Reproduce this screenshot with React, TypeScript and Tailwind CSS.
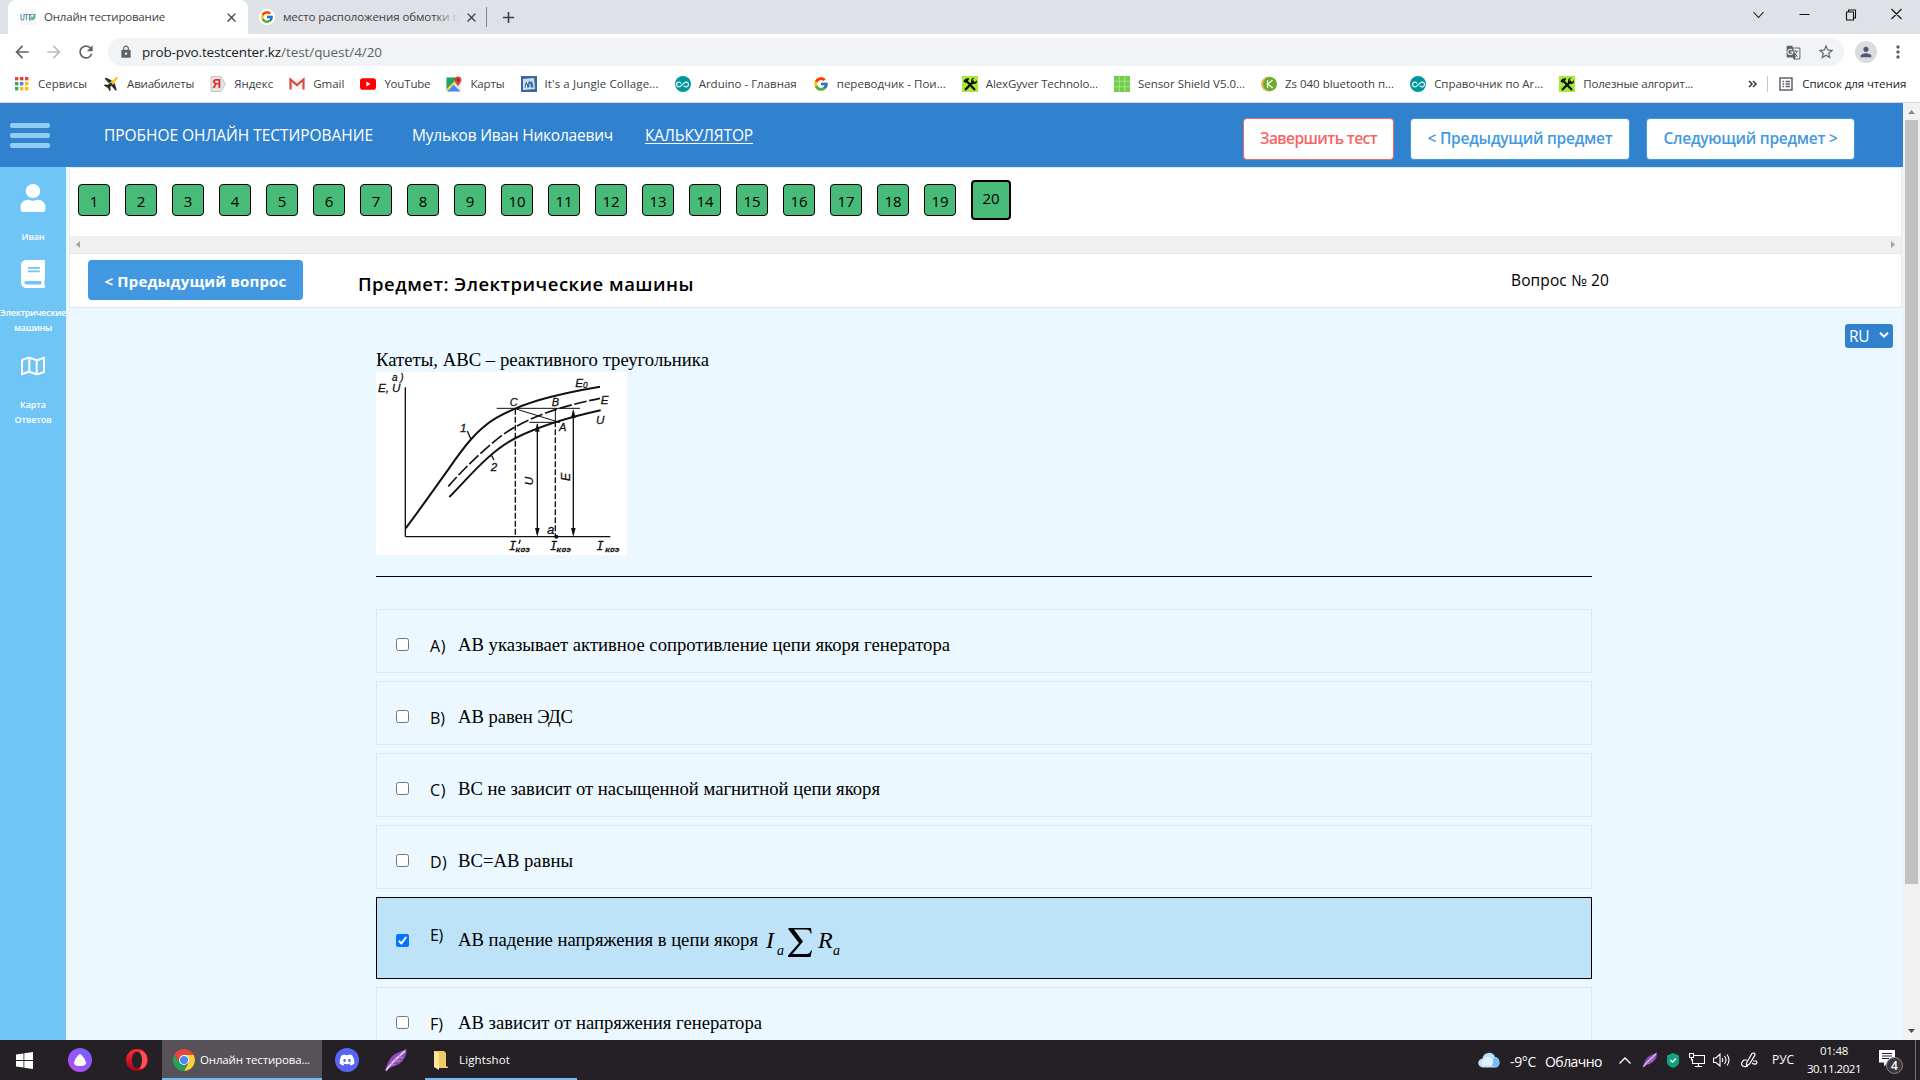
import { useLayoutEffect, useRef, type ReactNode } from 'react';
import { FaUser, FaBook, FaRegMap, FaDiscord } from 'react-icons/fa';
import { FcGoogle } from 'react-icons/fc';
import { MdArrowBack, MdArrowForward, MdRefresh, MdLock, MdStarBorder, MdPerson, MdMoreVert, MdAllInclusive, MdClose, MdAdd, MdGTranslate } from 'react-icons/md';

/** A single line of text whose letter spacing is adjusted so that it fills `w` pixels. */
function Fit({ w, className = '', underline = false, children }: { w: number; className?: string; underline?: boolean; children: string }) {
  const ref = useRef<HTMLSpanElement>(null);
  useLayoutEffect(() => {
    const el = ref.current;
    if (!el) return;
    const adjust = () => {
      el.style.letterSpacing = '0px';
      const natural = el.getBoundingClientRect().width;
      el.style.letterSpacing = `${(w - natural) / children.length}px`;
    };
    adjust();
    document.fonts?.ready.then(adjust);
  }, [w, children]);
  return (
    <span className={`inline-block shrink-0 whitespace-nowrap ${className}`} style={{ width: w }}>
      <span ref={ref} className={underline ? 'inline-block underline underline-offset-2' : 'inline-block'}>{children}</span>
    </span>
  );
}

const AppsIcon = () => (
  <svg viewBox="0 0 16 16" className="size-4">
    {['#ea4335', '#ea4335', '#ea4335', '#34a853', '#4285f4', '#fbbc05', '#34a853', '#fbbc05', '#fbbc05'].map((c, i) => (
      <rect key={i} x={1 + (i % 3) * 5} y={1 + Math.floor(i / 3) * 5} width="3.4" height="3.4" fill={c} />
    ))}
  </svg>
);
const Plane = () => (
  <svg viewBox="0 0 16 16" className="size-4">
    <path d="M5.500 8L13 1.200q2-.8 1.700 1L8.500 10z" fill="#f5c518" />
    <path d="M1.500 2.500l2-.8L9 4.800 6 7.200zM8.500 10l3-3 2.200 6.500-1 1.300zM.8 9.500l1-.9 3 .2L8 6.500l1.800 2-2.600 2.600.5 3.200-1 1L4.900 12z" fill="#2b2b2b" />
  </svg>
);
const Yandex = () => (
  <svg viewBox="0 0 16 16" className="size-4">
    <path d="M1 .5h10l4.500 7.500-4.500 7.500H1z" fill="#e4e4e4" stroke="#bbb" strokeWidth=".8" />
    <text x="2.500" y="12.200" fontSize="12" fontWeight="bold" fill="#e52620" fontFamily="Liberation Sans">Я</text>
  </svg>
);
const Gmail = () => (
  <svg viewBox="0 0 16 16" className="size-4">
    <rect x="1" y="2.500" width="14" height="11" fill="#f3f3f3" />
    <path d="M1.500 13.500V3.500l6.500 5.500 6.500-5.500v10" fill="none" stroke="#d54b3d" strokeWidth="2.200" />
  </svg>
);
const YouTube = () => (
  <svg viewBox="0 0 16 16" className="size-4">
    <rect y="2.300" width="16" height="11.400" rx="2.800" fill="#f00" />
    <path d="M6.400 5.600v4.800l4.100-2.400z" fill="#fff" />
  </svg>
);
const MapsIcon = () => (
  <svg viewBox="0 0 16 16" className="size-4">
    <rect x=".5" y="1.500" width="14" height="14" rx="1" fill="#e8e8e8" />
    <path d="M.5 1.500h9v5l-9 8z" fill="#1fa463" />
    <path d="M1 15.500l6.500-7 7 7z" fill="#4a89f3" />
    <path d="M1 14L11 4" stroke="#fcd34d" strokeWidth="1.800" />
    <path d="M12 .5a3.400 3.400 0 013.400 3.400C15.400 6.300 12 10 12 10S8.600 6.300 8.600 3.900A3.400 3.400 0 0112 .5z" fill="#dc4437" />
    <circle cx="12" cy="3.900" r="1.200" fill="#7a231c" />
  </svg>
);
const Jungle = () => (
  <svg viewBox="0 0 16 16" className="size-4">
    <rect width="16" height="16" fill="#3a699f" />
    <path d="M2 3l11-1 1 11-12 1z" fill="#cfdff0" />
    <path d="M3.500 11.500l1.500-6 2 3 1-4 2 2 1-2 1.500 7z" fill="#3a699f" />
    <path d="M5.500 12v-3M9 12V8" stroke="#fff" />
  </svg>
);
const Arduino = () => (
  <span className="flex size-4 items-center justify-center rounded-full bg-[#00979d] text-white"><MdAllInclusive className="size-[13px]" /></span>
);
const Tools = () => (
  <svg viewBox="0 0 16 16" className="size-4">
    <rect width="16" height="16" fill="#a8e83c" />
    <path d="M13 14L4 4.500M3 14L12 5" stroke="#0c1204" strokeWidth="2.300" />
    <path d="M1.500 5.500Q2 2.500 6.500 2L7 3.500 3.500 7z" fill="#0c1204" />
    <path d="M12.500 1.500l-2 2.500.3 2 2 .3 2.200-2Q15.500 8 12 8 9 8 9 5 9 2 12.500 1.500z" fill="#0c1204" />
  </svg>
);
const Shield = () => (
  <svg viewBox="0 0 16 16" className="size-4">
    <rect width="16" height="16" fill="#6fce4a" />
    <path d="M5.300 0v16M10.700 0v16M0 5.300h16M0 10.700h16" stroke="#b7e6a0" strokeWidth=".8" />
  </svg>
);
const KIcon = () => (
  <svg viewBox="0 0 16 16" className="size-4">
    <circle cx="7.500" cy="8" r="7.500" fill="#f0b45a" />
    <circle cx="9" cy="8" r="7" fill="#6aae2c" />
    <path d="M6.500 4v8M11.500 4L6.800 8.200l4.900 3.800" fill="none" stroke="#fff" strokeWidth="1.200" />
  </svg>
);
const Chrome = () => (
  <svg viewBox="0 0 24 24" className="size-[22px]">
    <path d="M1.600 6A12 12 0 0122.400 6z" fill="#e4483a" />
    <path d="M12 6.500h10.600A12 12 0 0112 24L17 15z" fill="#fbcd3f" />
    <path d="M1.600 6L7 15l8 2-3 7A12 12 0 011.600 6z" fill="#27a058" />
    <path d="M1.600 6l5.600 9V9.500L12 6.500h10.600L22 5 3 4z" fill="#e4483a" />
    <circle cx="12" cy="12" r="5.500" fill="#fff" />
    <circle cx="12" cy="12" r="4.500" fill="#4a8af4" />
  </svg>
);
const Feather = ({ className }: { className: string }) => (
  <svg viewBox="0 0 24 24" className={className}>
    <path d="M1.500 23C2 17 6 9 11 6 15 3.500 19 3 22.500.5 23 6 21 11 17 14.500 12 19 7 18 1.500 23z" fill="#8c4db5" />
    <path d="M2 22.500C7 15 14 9 21 3" stroke="#e3c7f2" strokeWidth="1.800" fill="none" />
    <path d="M8 13l-1 3 4 1M12 9l-1 4 5 0M16 6l-1 4 4-1" stroke="#c08be0" strokeWidth="1" fill="none" />
  </svg>
);

const bookmarks: [ReactNode, string, number][] = [
  [<AppsIcon />, 'Сервисы', 49],
  [<Plane />, 'Авиабилеты', 67],
  [<Yandex />, 'Яндекс', 39],
  [<Gmail />, 'Gmail', 31],
  [<YouTube />, 'YouTube', 46],
  [<MapsIcon />, 'Карты', 34],
  [<Jungle />, "It's a Jungle Collage...", 114],
  [<Arduino />, 'Arduino - Главная', 98],
  [<FcGoogle className="size-4" />, 'переводчик - Пои...', 109],
  [<Tools />, 'AlexGyver Technolo...', 112],
  [<Shield />, 'Sensor Shield V5.0...', 107],
  [<KIcon />, 'Zs 040 bluetooth п...', 109],
  [<Arduino />, 'Справочник по Ar...', 109],
  [<Tools />, 'Полезные алгорит...', 110],
];

function Browser() {
  return (
    <header className="h-[103px] shrink-0 border-b border-[#d5d7da] bg-white text-[#3c4043]">
      <div className="flex h-[34px] items-center bg-[#dee1e6] text-[11.5px]">
        <div className="ml-2 flex h-full w-[240px] items-center rounded-t-lg bg-white pl-3">
          <svg viewBox="0 0 16 16" className="size-4">
            <rect width="16" height="16" fill="#f4f6f8" />
            <path d="M1 5v4q0 2 1.500 2T4 9V5M4.500 5.500h4M6.500 5.500V11M12 5.500H9.500V11H11" fill="none" stroke="#6f93b3" strokeWidth="1.100" />
            <circle cx="12.300" cy="8" r="2.700" fill="none" stroke="#6f93b3" />
            <path d="M11 8l1.500 1.500L15.500 5" fill="none" stroke="#25b660" strokeWidth="1.200" />
          </svg>
          <Fit w={121} className="ml-2">Онлайн тестирование</Fit>
          <MdClose className="ml-[59px] size-[15px]" />
        </div>
        <div className="ml-[11px] flex size-4 items-center justify-center rounded-full bg-white"><FcGoogle className="size-[14px]" /></div>
        <div className="relative ml-2 w-[175px] overflow-hidden">
          <Fit w={176}>место расположения обмотки в</Fit>
          <div className="absolute inset-y-0 right-0 w-6 bg-linear-to-r from-transparent to-[#dee1e6]" />
        </div>
        <MdClose className="ml-[6px] size-[15px]" />
        <div className="ml-[7px] h-5 w-px bg-[#80868b]" />
        <MdAdd className="ml-3 size-[19px]" />
        <div className="flex-1" />
        <svg viewBox="0 0 162 20" className="mr-[9px] mb-1.5 h-5 w-[162px]" fill="none" stroke="#111" strokeWidth="1.100">
          <path d="M4.500 8l5 5.500 5-5.500M50.500 10.500h10M97.500 8h7v8h-7zM99.500 8V6h7v8h-2M142.500 5l10 10M152.500 5l-10 10" />
        </svg>
      </div>
      <div className="flex h-9 items-center text-[#5f6368]">
        <MdArrowBack className="ml-3 size-5" />
        <MdArrowForward className="ml-3 size-5 text-[#bbbdc0]" />
        <MdRefresh className="ml-3 size-5" />
        <div className="ml-3 flex h-7 w-[1736px] items-center rounded-full bg-[#f1f3f4] pl-[11px]">
          <MdLock className="size-[14px]" />
          <Fit w={139} className="ml-[9px] text-[13.5px] text-[#202124]">prob-pvo.testcenter.kz</Fit>
          <Fit w={101} className="text-[13.5px]">/test/quest/4/20</Fit>
          <MdGTranslate className="ml-auto size-[15px]" />
          <MdStarBorder className="mr-[9px] ml-[16px] size-[18px]" />
        </div>
        <div className="ml-[11px] flex size-[22px] items-center justify-center rounded-full bg-[#dadce0]"><MdPerson className="size-4 text-[#4d5a70]" /></div>
        <MdMoreVert className="ml-[11px] size-5" />
      </div>
      <div className="flex h-7 items-center pl-[14px] text-[11.5px]">
        <div className="flex gap-[16.100px]">
          {bookmarks.map(([icon, label, w]) => (
            <div key={label} className="flex items-center gap-2">
              <span className="shrink-0">{icon}</span>
              <Fit w={w}>{label}</Fit>
            </div>
          ))}
        </div>
        <svg viewBox="0 0 10 10" className="ml-[55px] size-[10px]" fill="none" stroke="#3c4043" strokeWidth="1.600"><path d="M1 2l3 3-3 3M5 2l3 3-3 3" /></svg>
        <div className="ml-[9px] h-4 w-px bg-[#c4c7cb]" />
        <svg viewBox="0 0 14 14" className="ml-[11px] size-[14px]" fill="none" stroke="#5f6368" strokeWidth="1.500"><path d="M1 1h12v12H1zM3.500 4.500h1.500M6.500 4.500H11M3.500 7h1.500M6.500 7H11M3.500 9.500h1.500M6.500 9.500H11" /></svg>
        <Fit w={104} className="ml-[9px] text-[#202124]">Список для чтения</Fit>
      </div>
    </header>
  );
}

function Sidebar() {
  return (
    <aside className="relative z-10 flex w-[66px] shrink-0 flex-col items-center bg-[#70c5f7] text-center text-[9px] leading-[15px] font-semibold text-white">
      <FaUser className="mt-[17px] h-7 w-6 scale-x-[1.050]" preserveAspectRatio="none" />
      <Fit w={23} className="mt-[17px]">Иван</Fit>
      <FaBook className="mt-4 h-7 w-6" preserveAspectRatio="none" />
      <Fit w={66} className="mt-[17px]">Электрические</Fit>
      <Fit w={38}>машины</Fit>
      <FaRegMap className="mt-[19px] h-6 w-6" />
      <Fit w={26} className="mt-[19px]">Карта</Fit>
      <Fit w={37}>Ответов</Fit>
    </aside>
  );
}

function Graph() {
  return (
    <svg viewBox="48 93 753 549" className="h-[183px] w-[251px] bg-white" fill="none" stroke="#111" strokeWidth="4">
      <path d="M136 139V587M137 587H751" strokeWidth="4" />
      <path d="M137 562C180 505 215 455 265 385 310 320 350 265 410 230 480 190 570 162 720 137" strokeWidth="6" />
      <path d="M265 436C310 385 365 330 430 280 500 232 590 198 720 172" strokeDasharray="38 8" strokeWidth="5" />
      <path d="M268 468C330 405 390 330 467 291 540 255 630 228 722 208" strokeWidth="6" />
      <path d="M410 202H660M508 244H600M465 203L588 241M586 203V241" strokeWidth="3" />
      <path d="M466 203V587M586 241V587" strokeDasharray="18 6" strokeWidth="4" />
      <path d="M532 250V580M640 210V580M322 270L333 295M393 341L402 357" strokeWidth="4" />
      <path d="M532 246l7 26h-14zM532 587l7-26h-14zM640 204l7 26h-14zM640 587l7-26h-14z" fill="#111" stroke="none" />
      <circle cx="589" cy="587" r="6" fill="#111" stroke="none" />
      <path d="M481 596l-4 12" strokeWidth="4" />
      <g fill="#111" stroke="#111" strokeWidth=".8" fontFamily="Liberation Sans" fontStyle="italic" fontSize="35">
        <text x="96" y="119" fontSize="30">а )</text>
        <text x="54" y="153" textLength="67">E, U</text>
        <text x="449" y="195" fontSize="33">C</text>
        <text x="575" y="196" fontSize="33">B</text>
        <text x="597" y="269" fontSize="33">A</text>
        <text x="646" y="137">E<tspan fontSize="25" dy="5">0</tspan></text>
        <text x="722" y="189">E</text>
        <text x="708" y="248">U</text>
        <text x="300" y="272">1</text>
        <text x="392" y="389">2</text>
        <text x="561" y="579" fontSize="40">a</text>
        <text transform="translate(520 433) rotate(-90)">U</text>
        <text transform="translate(631 420) rotate(-90)" fontSize="37">E</text>
        <g fontFamily="Liberation Mono">
          <text x="446" y="627" fontSize="38">I<tspan fontSize="24" dx="-2" dy="7" fontWeight="bold">коз</tspan></text>
          <text x="569" y="627" fontSize="38">I<tspan fontSize="24" dx="-2" dy="7" fontWeight="bold">коэ</tspan></text>
          <text x="709" y="627" fontSize="38">I<tspan fontSize="24" dx="4" dy="7" fontWeight="bold">коэ</tspan></text>
        </g>
      </g>
    </svg>
  );
}

function Check({ on }: { on?: boolean }) {
  return on ? (
    <svg viewBox="0 0 13 13" className="size-[13px] shrink-0"><rect width="13" height="13" rx="2" fill="#0075ff" /><path d="M2.800 6.800l2.600 2.700 4.800-6.500" fill="none" stroke="#fff" strokeWidth="2" /></svg>
  ) : (
    <span className="block size-[13px] shrink-0 rounded-[2.500px] border border-[#767676] bg-white" />
  );
}

function Formula() {
  return (
    <svg viewBox="0 0 76 34" className="ml-[6px] h-[34px] w-[76px] shrink-0" fill="#000" fontFamily="Liberation Serif" fontStyle="italic">
      <text x="2" y="22" fontSize="24">I</text>
      <text x="13" y="29" fontSize="14">a</text>
      <text x="54" y="22" fontSize="24">R</text>
      <text x="69" y="29" fontSize="14">a</text>
      <path d="M24.500 2H47l.7 5.500h-1C46 4.500 45 3.500 42 3.500H30L39 15.500 28.500 28H42c3 0 4-1 5-3.500h1L46.500 31H24v-1.500L35 17 24.500 3.500z" />
    </svg>
  );
}

function Answer({ letter, text, w, lw }: { letter: string; text: string; w: number; lw: number }) {
  const selected = letter === 'E)';
  return (
    <div className={selected ? 'mb-2 flex h-[82px] shrink-0 items-center border border-black bg-[#bee3f8] pl-[19px]' : 'mb-2 flex h-16 shrink-0 items-center border border-[#dbe9f3] pl-[19px]'}>
      <div className={selected ? 'pt-1' : 'pt-[7px]'}><Check on={selected} /></div>
      <div className={selected ? 'ml-[21px] w-[29px] pb-[6px] text-base leading-6' : 'ml-[21px] w-[29px] pt-[10px] text-base leading-6'}><Fit w={lw}>{letter}</Fit></div>
      <Fit w={w} className={selected ? "-ml-px pt-[4px] font-['Liberation_Serif',serif] text-[18.670px] leading-7" : "-ml-px pt-[8px] font-['Liberation_Serif',serif] text-[18.670px] leading-7"}>{text}</Fit>
      {selected && <div className="pt-[10px]"><Formula /></div>}
    </div>
  );
}

const answers = [
  { letter: 'A)', text: 'АВ указывает активное сопротивление цепи якоря генератора', w: 492, lw: 16 },
  { letter: 'B)', text: 'АВ равен ЭДС', w: 115, lw: 15 },
  { letter: 'C)', text: 'ВС не зависит от насыщенной магнитной цепи якоря', w: 422, lw: 16 },
  { letter: 'D)', text: 'ВС=АВ равны', w: 115, lw: 17 },
  { letter: 'E)', text: 'АВ падение напряжения в цепи якоря', w: 300, lw: 13 },
  { letter: 'F)', text: 'АВ зависит от напряжения генератора', w: 304, lw: 13 },
];

function TestPage() {
  return (
    <div className="flex min-w-0 flex-1 flex-col">
      <div className="flex h-16 shrink-0 items-center bg-[#3182ce] pl-[10px] text-[15.500px] text-white">
        <div className="flex w-10 flex-col gap-[5px]">
          {[0, 1, 2].map((i) => <div key={i} className="h-[5px] rounded-xs bg-[#90cdf4]" />)}
        </div>
        <Fit w={269} className="mt-0.5 ml-[54px]">ПРОБНОЕ ОНЛАЙН ТЕСТИРОВАНИЕ</Fit>
        <Fit w={201} className="mt-0.5 ml-[39px]">Мульков Иван Николаевич</Fit>
        <Fit w={108} underline className="mt-0.5 ml-8">КАЛЬКУЛЯТОР</Fit>
        <div className="mt-[8px] ml-auto flex gap-4 pr-[48px] text-[15.500px] font-semibold text-[#4299e1]">
          <button className="flex h-[42px] w-[151px] items-center justify-center rounded border border-[#f56565] bg-white text-[#f56565]"><Fit w={117}>Завершить тест</Fit></button>
          <button className="flex h-[42px] w-[220px] items-center justify-center rounded border border-[#4299e1] bg-white"><Fit w={185}>{'< Предыдущий предмет'}</Fit></button>
          <button className="flex h-[42px] w-[209px] items-center justify-center rounded border border-[#4299e1] bg-white"><Fit w={174}>{'Следующий предмет >'}</Fit></button>
        </div>
      </div>
      <div className="flex min-h-0 flex-1">
        <Sidebar />
        <main className="flex min-w-0 flex-1 flex-col overflow-hidden bg-[#ebf8ff] pl-[3px]">
          <div className="mr-px h-[87px] shrink-0 border border-[#e2e8f0] bg-white">
            <div className="flex h-[68px] gap-[15px] pt-4 pl-2">
              {Array.from({ length: 19 }, (_, i) => (
                <div key={i} className="flex size-8 items-center justify-center rounded border border-black bg-[#48bb78] pt-[3px] text-[15px]">{i + 1}</div>
              ))}
              <div className="-mt-1 flex size-10 items-center justify-center rounded border-2 border-black bg-[#48bb78] pb-[3px] text-[15px]">20</div>
            </div>
            <div className="flex h-[17px] items-center justify-between bg-[#f0f0f0] px-[6px]">
              <svg viewBox="0 0 4 7" className="h-[7px] w-1" fill="#a3a3a3"><path d="M4 0v7L0 3.500z" /></svg>
              <svg viewBox="0 0 4 7" className="h-[7px] w-1" fill="#a3a3a3"><path d="M0 0v7l4-3.500z" /></svg>
            </div>
          </div>
          <div className="mr-px flex h-[54px] shrink-0 border border-t-0 border-[#e2e8f0] bg-white">
            <button className="mt-[6px] ml-[18px] flex h-10 w-[215px] items-center justify-center rounded bg-[#4299e1] pt-0.5 text-[15px] font-bold text-white"><Fit w={182}>{'< Предыдущий вопрос'}</Fit></button>
            <Fit w={336} className="mt-4 ml-[55px] text-[18.500px] leading-7 font-semibold">Предмет: Электрические машины</Fit>
            <Fit w={98} className="mt-[14px] ml-[817px] text-[15.500px] leading-6">Вопрос № 20</Fit>
          </div>
          <div className="mt-4 mr-[10px] ml-auto flex h-[24px] w-12 shrink-0 items-center rounded-[3px] bg-[#3182ce] pt-px pl-1 text-white">
            <Fit w={20} className="text-[15.500px]">RU</Fit>
            <svg viewBox="0 0 10 6" className="mb-1 ml-[10px] h-[6px] w-[10px]" fill="none" stroke="#fff" strokeWidth="2"><path d="M1 .8l4 3.800L9 .8" /></svg>
          </div>
          <section className="ml-[307px] flex w-[1216px] flex-col">
            <Fit w={333} className="font-['Liberation_Serif',serif] text-[18.670px] leading-6">Катеты, ABC – реактивного треугольника</Fit>
            <Graph />
            <div className="mt-[21px] mb-8 h-px shrink-0 bg-black" />
            {answers.map((a) => <Answer key={a.letter} {...a} />)}
          </section>
        </main>
      </div>
    </div>
  );
}

function Taskbar() {
  return (
    <footer className="flex h-10 shrink-0 items-center bg-[#242025] text-white">
      <svg viewBox="0 0 17 17" className="ml-4 size-[17px]" fill="#fff"><path d="M0 2.400l7.500-1v6.700H0zM8.300 1.300L17 0v8.100H8.300zM0 8.900h7.500v6.700l-7.500-1zM8.300 8.900H17V17l-8.700-1.300z" /></svg>
      <svg viewBox="0 0 24 24" className="ml-[35px] size-6">
        <defs><linearGradient id="al" x1="0" y1="1" x2="1" y2="0"><stop stopColor="#b94df0" /><stop offset="1" stopColor="#6b63ff" /></linearGradient></defs>
        <circle cx="12" cy="12" r="12" fill="url(#al)" />
        <path d="M12 6c1.500 0 6 6.500 6 9s-3.500 3-6 3-6-.5-6-3 4.500-9 6-9z" fill="#fff" />
      </svg>
      <svg viewBox="0 0 24 24" className="ml-[34px] size-[22px]">
        <defs><linearGradient id="op" x1="0" y1="0" x2="0" y2="1"><stop stopColor="#ff2a3c" /><stop offset="1" stopColor="#a60614" /></linearGradient></defs>
        <path fillRule="evenodd" d="M12 0a12 12 0 110 24 12 12 0 010-24zm0 3c-3.500 0-5.500 4-5.500 9s2 9 5.500 9 5.500-4 5.500-9-2-9-5.500-9z" fill="url(#op)" />
        <path d="M14 2.800c6-2 9 4 9 9.200s-3 11-9 9.200c2.500-1.200 3.500-5 3.500-9.200s-1-8-3.500-9.200z" fill="#ff5058" />
      </svg>
      <div className="ml-[14px] flex h-10 w-40 items-center border-b-2 border-[#76b9ed] bg-[#565257] pt-0.5 pl-[11px] text-[11.500px]">
        <Chrome />
        <Fit w={110} className="ml-[5px]">Онлайн тестирова...</Fit>
      </div>
      <div className="ml-[13px] flex size-6 items-center justify-center rounded-full bg-[#5865f2]"><FaDiscord className="size-4" /></div>
      <Feather className="ml-[25px] size-6" />
      <div className="ml-[17px] flex h-10 w-[152px] items-center border-b-2 border-[#76b9ed] pt-0.5 pl-2 text-[11.500px]">
        <svg viewBox="0 0 16 20" className="h-5 w-4"><path d="M1 1h10l2 2v13l2 1v1H6l-5-1z" fill="#f3ca62" /><path d="M1 1l5 2v17l-5-3z" fill="#ffe7a0" /></svg>
        <Fit w={51} className="ml-[10px]">Lightshot</Fit>
      </div>
      <div className="flex-1" />
      <svg viewBox="0 0 22 16" className="h-4 w-[22px]"><path d="M5 15.500a4.500 4.500 0 01-.5-9A6.500 6.500 0 0117 5a5.500 5.500 0 011 10.500z" fill="#b8e0fb" /><path d="M17 5a5.500 5.500 0 011 10.500L12 12z" fill="#7cbcf0" /><path d="M5 14a3.500 3.500 0 010-6c1-3 6-5 9-1s0 7-4 7z" fill="#dff2ff" /></svg>
      <Fit w={26} className="mt-0.5 ml-[10px] text-[14px]">-9°C</Fit>
      <Fit w={57} className="mt-0.5 ml-[9px] text-[14px]">Облачно</Fit>
      <svg viewBox="0 0 12 7" className="ml-[17px] h-[7px] w-3" fill="none" stroke="#fff" strokeWidth="1.300"><path d="M.5 6.500L6 1l5.500 5.500" /></svg>
      <Feather className="ml-[11px] size-4" />
      <svg viewBox="0 0 12 15" className="ml-[9px] h-[15px] w-3"><path d="M6 0l6 2.500V9c0 3-3 5-6 6-3-1-6-3-6-6V2.500z" fill="#10a37f" /><path d="M3.500 7l2 2L9 5.500" fill="none" stroke="#fff" strokeWidth="1.300" /></svg>
      <svg viewBox="0 0 16 14" className="ml-[10px] h-[14px] w-4" fill="none" stroke="#fff" strokeWidth="1.100"><path d="M5 2.500h10.500v8H3.500V6M6 13.500h7M9.500 10.500v3M.5.500h4v4h-4zM2.500 4.500v3" /></svg>
      <svg viewBox="0 0 17 14" className="ml-2 h-[14px] w-[17px]" fill="none" stroke="#fff" strokeWidth="1.100"><path d="M.5 5H3l4-4v12L3 9.500H.5zM9 5q1.500 2 0 4M11.500 3q3 4 0 8M14 1.500q4 5.500 0 11" /></svg>
      <svg viewBox="0 0 17 16" className="ml-[11px] h-4 w-[17px]" fill="none" stroke="#fff" strokeWidth="1.200"><path d="M5.500 11L11 1.500q3-1.500 3 1.500L8.500 12l-3 1.500zM6 8H3q-2.500 2-2.500 4T3 14.500t4-1M12 9h3q2 1 0 3-2 .5-4-1" /></svg>
      <Fit w={22} className="ml-[14px] text-[12px]">РУС</Fit>
      <div className="ml-[13px] flex w-[54px] flex-col items-center text-[11.500px] leading-[18px]">
        <Fit w={28}>01:48</Fit>
        <Fit w={54}>30.11.2021</Fit>
      </div>
      <div className="relative mt-1 ml-[18px] h-6 w-[25px]">
        <svg viewBox="0 0 17 17" className="size-[17px]"><path d="M0 0h16v12.500H9L5 16.500v-4H0z" fill="#fff" /><path d="M3 3.500h10M3 6h10M3 8.500h7" stroke="#242025" /></svg>
        <span className="absolute top-[7px] left-[7px] flex size-[17px] items-center justify-center rounded-full border border-[#888] bg-[#3b373c] text-[12px] font-semibold">4</span>
      </div>
      <div className="ml-[11px] h-10 w-px bg-[#77747a]" />
      <div className="w-1" />
    </footer>
  );
}

export default function App() {
  return (
    <div className="flex h-[1080px] w-[1920px] flex-col overflow-hidden bg-white font-['Open_Sans','Noto_Sans',sans-serif] text-black">
      <Browser />
      <div className="flex min-h-0 flex-1">
        <TestPage />
        <div className="flex w-[17px] shrink-0 flex-col items-center bg-[#f1f1f1]">
          <svg viewBox="0 0 7 4" className="mt-[7px] h-1 w-[7px]" fill="#8a8a8a"><path d="M0 4h7L3.500 0z" /></svg>
          <div className="mt-[6px] h-[764px] w-[13px] bg-[#c1c1c1]" />
          <svg viewBox="0 0 7 4" className="mt-auto mb-[7px] h-1 w-[7px]" fill="#505050"><path d="M0 0h7L3.500 4z" /></svg>
        </div>
      </div>
      <Taskbar />
    </div>
  );
}
